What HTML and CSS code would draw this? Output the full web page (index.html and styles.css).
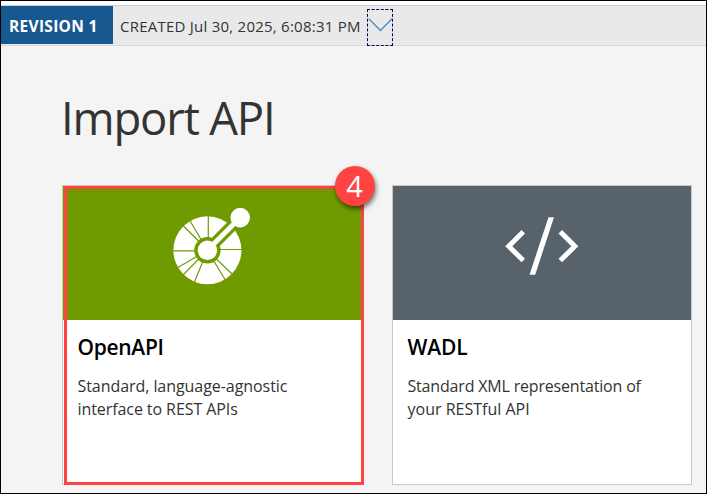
FILE: index.html
```html
<!DOCTYPE html>
<html lang="en">
<head>
<meta charset="utf-8">
<title>Import API</title>
<link rel="stylesheet" href="styles.css">
</head>
<body>
<div class="frame">
  <header class="revision-bar">
    <span class="revision"><span class="revision-text">REVISION 1</span></span>
    <span class="created">CREATED Jul 30, 2025, 6:08:31 PM</span>
    <button class="toggle" aria-label="Revisions"><svg width="24" height="35" viewBox="0 0 24 35"><path d="M0.8 8.8 12.5 20.5 24 8.8" fill="none" stroke="#4a8dba" stroke-width="1.3"/></svg></button>
  </header>
  <main class="content">
    <h1 class="title">Import API</h1>
    <div class="cards">
      <article class="card">
        <div class="banner banner-green">
          <svg width="298" height="134" viewBox="63 186 298 134">
            <circle cx="207.4" cy="250.3" r="34" fill="#fff"/>
            <g stroke="#709b00" stroke-width="1.2">
              <path d="M208.3 250V215M207.4 250 189.5 220M207.4 250 183 225.5M207.4 250.8H172M207.4 250.3 177 268M207.4 250.3 183 275M207.4 250.3 194 283M207.4 250.3 225.3 280M207.4 250.3 232 274M207.4 249.5H243"/>
            </g>
            <circle cx="207.4" cy="250.3" r="13.2" fill="#709b00"/>
            <path d="M207.4 250.3 240 217.7" stroke="#709b00" stroke-width="11.5"/>
            <path d="M207.4 250.3 240 217.7" stroke="#fff" stroke-width="5"/>
            <circle cx="207.4" cy="250.3" r="9.7" fill="#fff"/>
            <circle cx="240.2" cy="217.6" r="9.8" fill="#fff"/>
          </svg>
        </div>
        <div class="card-body">
          <h2 class="name name-openapi">OpenAPI</h2>
          <p class="desc"><span class="line-a">Standard, language-agnostic</span><br><span class="line-b">interface to REST APIs</span></p>
        </div>
        <div class="highlight"></div>
        <div class="badge">4</div>
      </article>
      <article class="card">
        <div class="banner banner-slate">
          <svg width="298" height="134" viewBox="393 186 298 134">
            <g fill="none" stroke="#fff" stroke-width="5">
              <path d="M523.3 231.8 508.8 246.2 523.3 260.6M560.3 231.8 574.8 246.2 560.3 260.6"/>
            </g>
            <path d="M548.5 217.3H554L535.2 274.7H529.5Z" fill="#fff"/>
          </svg>
        </div>
        <div class="card-body">
          <h2 class="name name-wadl">WADL</h2>
          <p class="desc"><span class="line-c">Standard XML representation of</span><br><span class="line-d">your RESTful API</span></p>
        </div>
      </article>
    </div>
  </main>
</div>
</body>
</html>
```
FILE: styles.css
```css
* { box-sizing: border-box; }
body { margin: 0; font-family: "Open Sans", "Noto Sans", sans-serif; color: #333; }
.frame { width: 707px; height: 494px; border: 1px solid #000; padding-top: 4px; background: linear-gradient(#fff 4px, #f4f4f4 4px); overflow: hidden; }
.revision-bar { display: flex; height: 41px; background: #e9e9e9; border-top: 1px solid #d0d0d0; border-bottom: 1px solid #d9d9d9; font-size: 15px; line-height: 40px; white-space: nowrap; }
.revision { width: 112px; height: 38px; padding-left: 8px; background: #185891; color: #fff; font-weight: 700; }
.revision-text { font-size: 15.5px; letter-spacing: 0.3px; }
.created { width: 254px; padding-left: 7px; letter-spacing: 0.24px; }
.toggle { width: 26px; height: 37px; margin-top: 3px; padding: 0; border: 1px dashed #00004b; background: none; }
.toggle svg { display: block; }
.content { padding: 40px 0 0 60px; }
.title { margin: 0; height: 99px; font-size: 45.5px; line-height: 62px; font-weight: 400; letter-spacing: -1.2px; }
.cards { display: flex; gap: 30px; padding-left: 1px; }
.card { position: relative; width: 300px; height: 300px; flex: none; border: 1px solid #c8c8c8; background: #fff; }
.banner { height: 134px; }
.banner svg { display: block; }
.banner-green { background: #709b00; }
.banner-slate { background: #58626b; }
.card-body { padding: 12px 14.5px; }
.name { margin: 0; font-size: 21px; line-height: 30px; font-weight: 600; color: #000; }
.desc { margin: 13px 0 0; font-size: 16px; line-height: 23px; white-space: nowrap; }
.name-openapi { letter-spacing: -0.3px; }
.name-wadl { letter-spacing: -0.1px; }
.line-a { letter-spacing: -0.06px; }
.line-b { letter-spacing: -0.08px; }
.line-c { letter-spacing: -0.18px; }
.line-d { letter-spacing: 0; }
.highlight { position: absolute; left: 1px; top: 0; width: 300px; height: 299px; border: 3px solid #ff4343; }
.badge { position: absolute; left: 272px; top: -20px; width: 40px; height: 40px; border-radius: 50%; background: #ff4343; color: #fff; font-size: 29px; line-height: 40px; text-align: center; text-indent: -1px; box-shadow: 1px 3px 5px rgba(0, 0, 0, .55); }
```
